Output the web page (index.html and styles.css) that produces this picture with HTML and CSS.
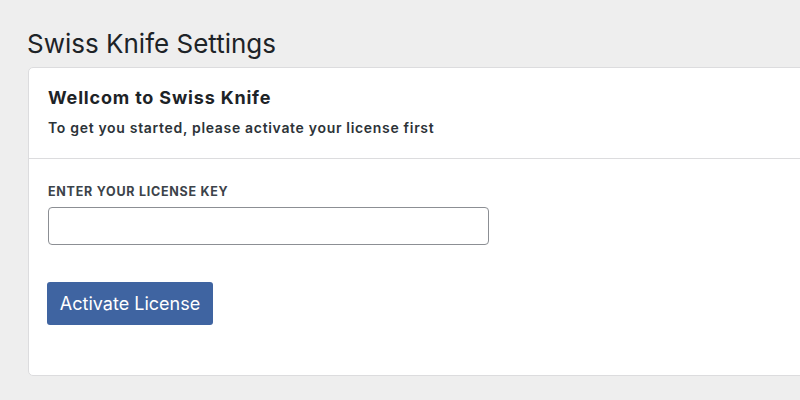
FILE: index.html
```html
<!DOCTYPE html>
<html>
<head>
<meta charset="utf-8">
<link rel="stylesheet" href="styles.css">
</head>
<body>
<div class="wrap">
  <h1 class="page-title">Swiss Knife Settings</h1>
  <div class="card">
    <div class="card-header">
      <h2 class="card-title">Wellcom to Swiss Knife</h2>
      <p class="card-sub">To get you started, please activate your license first</p>
    </div>
    <div class="card-body">
      <label class="field-label" for="key">ENTER YOUR LICENSE KEY</label>
      <input class="field-input" id="key" type="text">
      <button class="btn">Activate License</button>
    </div>
  </div>
</div>
</body>
</html>
```
FILE: styles.css
```css
html, body {
  margin: 0;
  padding: 0;
  background: #eeeeee;
  overflow: hidden;
  font-family: Inter, "Liberation Sans", sans-serif;
  color: #1d2327;
}
.wrap {
  padding: 28px 0 0 27px;
}
.page-title {
  margin: 0;
  font-size: 26px;
  font-weight: 400;
  line-height: 32px;
  color: #1d2327;
}
.card {
  margin-top: 7px;
  width: 800px;
  background: #fff;
  border: 1px solid #dcdcde;
  border-radius: 5px;
  margin-left: 1px;
}
.card-header {
  padding: 18px 19px 20px;
  border-bottom: 1px solid #dcdcde;
}
.card-title {
  margin: 0;
  font-size: 18px;
  font-weight: 700;
  line-height: 24px;
  letter-spacing: 0.82px;
}
.card-sub {
  margin: 8px 0 0;
  font-size: 14px;
  font-weight: 600;
  line-height: 20px;
  letter-spacing: 0.68px;
  color: #2c3338;
}
.card-body {
  padding: 25px 19px 50px 18px;
  display: flex;
  flex-direction: column;
  align-items: flex-start;
}
.field-label {
  margin-left: 1px;
  font-size: 12.5px;
  font-weight: 700;
  line-height: 16px;
  letter-spacing: 0.74px;
  color: #3c434a;
}
.field-input {
  margin: 7px 0 0 1px;
  width: 441px;
  height: 38px;
  box-sizing: border-box;
  border: 1px solid #8c8f94;
  border-radius: 4px;
  background: #fff;
}
.btn {
  margin-top: 37px;
  width: 166px;
  height: 43px;
  background: #3f64a1;
  color: #fff;
  border: none;
  border-radius: 3px;
  font-family: inherit;
  font-size: 18px;
  font-weight: 400;
  padding: 0;
}
```
